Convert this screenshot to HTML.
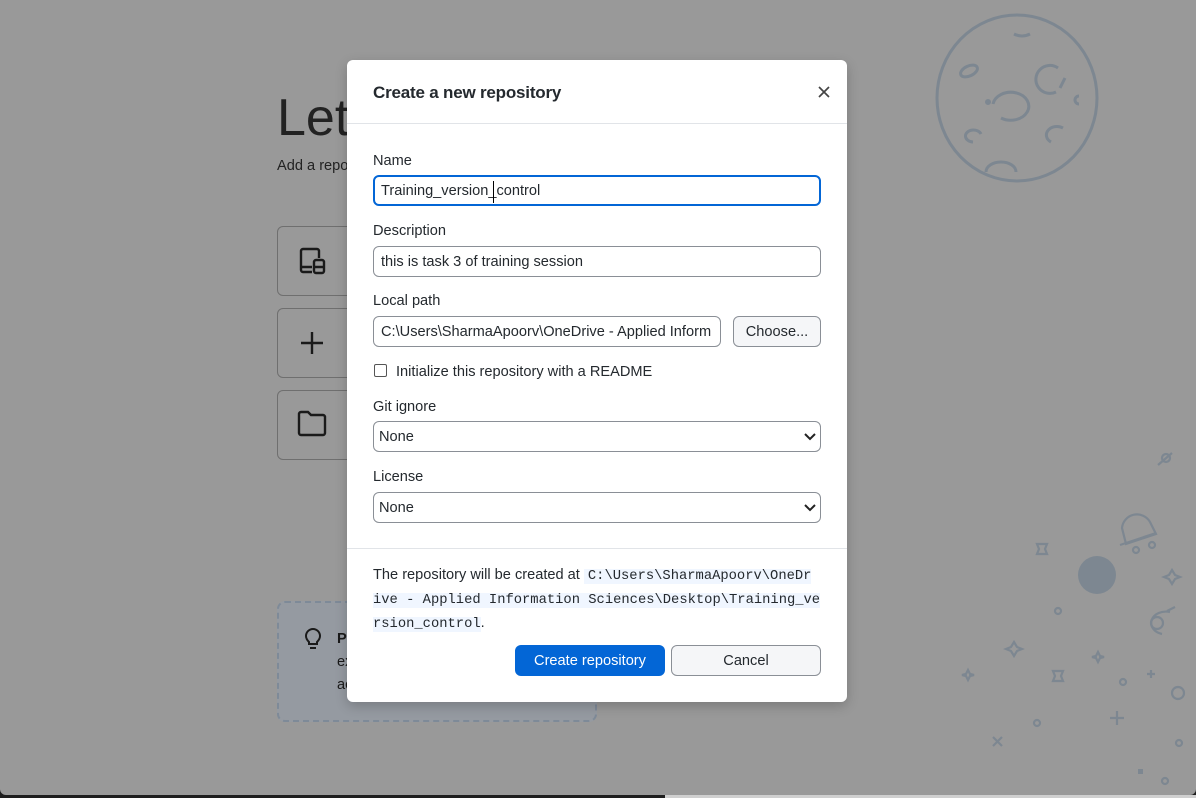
<!DOCTYPE html>
<html><head><style>
*{box-sizing:border-box}
body{margin:0;width:1196px;height:798px;overflow:hidden;background:#1e1e1e;font-family:"Liberation Sans",sans-serif;position:relative}
#bg{position:absolute;left:0;top:0;width:1196px;height:795px;background:#999;border-radius:0 0 6px 6px}
#strip{position:absolute;left:665px;top:795px;width:531px;height:3px;background:#cfcfcf}
.t{position:absolute;color:#1a1a1a}
.card{position:absolute;left:277px;width:100px;border:1px solid #6f6f6f;border-radius:6px}
.modal{position:absolute;left:347px;top:60px;width:500px;height:642px;background:#fff;border-radius:6px;box-shadow:0 4px 12px rgba(0,0,0,.2)}
.lbl{position:absolute;left:26px;font-size:14.6px;color:#24292e}
.inp{position:absolute;left:26px;width:448px;height:31px;border:1px solid #8a8f96;border-radius:6px;font-size:14.6px;color:#24292e;padding:2px 0 0 7px;line-height:27px;white-space:nowrap;overflow:hidden}
.code{font-family:"Liberation Mono",monospace;font-size:13.8px;background:#f0f6ff;white-space:nowrap}
</style></head><body>
<div id="bg"></div><div id="strip"></div>
<div class="t" style="left:277px;top:88px;font-size:52px;color:#222;font-weight:300">Let</div>
<div class="t" style="left:277px;top:158px;font-size:14.6px;color:#222">Add a repo</div>
<div class="card" style="top:226px;height:70px"></div>
<div class="card" style="top:308px;height:70px"></div>
<div class="card" style="top:390px;height:70px"></div>
<svg style="position:absolute;left:297px;top:245px" width="32" height="32" viewBox="0 0 32 32" fill="none" stroke="#1a1a1a" stroke-width="2.4"><path d="M15 27H6a2 2 0 0 1-2-2V6a2 2 0 0 1 2-2h14a2 2 0 0 1 2 2v7"/><rect x="17" y="15" width="10" height="13" rx="2"/><path d="M4 22h11M17 22h10"/></svg>
<svg style="position:absolute;left:297px;top:328px" width="30" height="30" viewBox="0 0 30 30" stroke="#1a1a1a" stroke-width="2.4"><path d="M15 4v22M4 15h22"/></svg>
<svg style="position:absolute;left:296px;top:409px" width="32" height="30" viewBox="0 0 32 30" fill="none" stroke="#1a1a1a" stroke-width="2.4"><path d="M3 5a2 2 0 0 1 2-2h7l3 3h12a2 2 0 0 1 2 2v16a2 2 0 0 1-2 2H5a2 2 0 0 1-2-2z"/></svg>
<div style="position:absolute;left:277px;top:601px;width:320px;height:121px;border:2px dashed #7e8a98;border-radius:8px;background:#959aa1"></div>
<svg style="position:absolute;left:303px;top:627px" width="20" height="24" viewBox="0 0 20 24" fill="none" stroke="#1a1a1a" stroke-width="2"><path d="M6 15c-2-2-3-3.5-3-6a7 7 0 0 1 14 0c0 2.5-1 4-3 6v2H6z M7 21h6"/></svg>
<div class="t" style="left:337px;top:631px;font-size:14.6px;font-weight:bold">P</div>
<div class="t" style="left:337px;top:654px;font-size:14.6px">ex</div>
<div class="t" style="left:337px;top:677px;font-size:14.6px">ac</div>
<svg style="position:absolute;left:0;top:0" width="1196" height="798" fill="none" stroke="#7d8791" stroke-width="3">
<ellipse cx="1017" cy="98" rx="80" ry="83"/>
<ellipse cx="969" cy="71" rx="9" ry="5" transform="rotate(-25 969 71)"/>
<path d="M1058 68a14 14 0 1 0 -2 24M1065 78l-5 10"/>
<path d="M1079 96a4 4 0 0 0 0 8"/>
<path d="M993 104a18 14 0 1 1 8 14"/><circle cx="988" cy="102" r="1.5"/>
<path d="M981 134a8 6 0 1 0 -8 8"/>
<path d="M1063 128a10 8 0 0 0 -12 14"/>
<path d="M986 172a15 10 0 0 1 30 0"/>
<path d="M1014 34q8 4 16 0"/>
<g stroke-width="2.2">
<circle cx="1166" cy="458" r="4"/><path d="M1158 465l14-12"/>
<path d="M1122 528a15 15 0 0 1 28 -6l6 12-30 10z M1120 545l36-12"/>
<circle cx="1136" cy="550" r="3"/><circle cx="1152" cy="545" r="3"/>
<path d="M1172 570l3 5 5 2-5 2-3 5-3-5-5-2 5-2z"/>
<path d="M1037 544l10 0 -2 5 2 5-10 0 2-5z"/>
<path d="M1175 607l-8 4 M1170 612a13 10 0 1 0 -8 22"/><circle cx="1157" cy="623" r="6"/>
<circle cx="1058" cy="611" r="3"/>
<path d="M1014 642l3 5 5 2-5 2-3 5-3-5-5-2 5-2z M968 670l2 4 4 1-4 1-2 4-2-4-4-1 4-1z M1098 652l2 4 4 1-4 1-2 4-2-4-4-1 4-1z"/>
<path d="M1053 671l10 0-2 5 2 5-10 0 2-5z"/>
<circle cx="1123" cy="682" r="3"/><circle cx="1178" cy="693" r="6"/><circle cx="1037" cy="723" r="3"/><circle cx="1179" cy="743" r="3"/><circle cx="1165" cy="781" r="3"/>
<path d="M1117 711v14M1110 718h14M1151 670v8M1147 674h8M993 737l9 9M1002 737l-9 9"/>
</g>
<rect x="1138" y="769" width="5" height="5" fill="#7d8791" stroke="none"/>
</svg>
<svg style="position:absolute;left:1076px;top:553px" width="44" height="44"><circle cx="21" cy="22" r="19" fill="#7d8791"/></svg>
<div class="modal">
<div style="position:absolute;left:26px;top:23px;font-size:17px;color:#24292e;font-weight:bold;letter-spacing:-0.2px">Create a new repository</div>
<svg style="position:absolute;left:471px;top:26px" width="12" height="12" viewBox="0 0 12 12" stroke="#444" stroke-width="1.7"><path d="M1 1l10 10M11 1L1 11"/></svg>
<div style="position:absolute;left:0;top:63px;width:500px;border-top:1px solid #e1e4e8"></div>
<div class="lbl" style="top:93px">Name</div>
<div class="inp" style="top:115px;border:2px solid #0366d6;line-height:25px;padding-left:6px">Training_version_control<span style="position:absolute;left:118px;top:4px;width:1px;height:22px;background:#000"></span></div>
<div class="lbl" style="top:163px">Description</div>
<div class="inp" style="top:186px">this is task 3 of training session</div>
<div class="lbl" style="top:233px">Local path</div>
<div class="inp" style="top:256px;width:348px">C:\Users\SharmaApoorv\OneDrive - Applied Inform</div>
<div style="position:absolute;left:386px;top:256px;width:88px;height:31px;border:1px solid #8a8f96;border-radius:6px;background:#f5f6f8;font-size:14.6px;text-align:center;padding-top:2px;line-height:27px;color:#24292e">Choose...</div>
<div style="position:absolute;left:27px;top:304px;width:13px;height:13px;border:1px solid #555;border-radius:2px"></div>
<div class="lbl" style="left:49px;top:304px">Initialize this repository with a README</div>
<div class="lbl" style="top:339px">Git ignore</div>
<div class="inp" style="top:361px;padding-left:5px">None</div>
<div class="lbl" style="top:409px">License</div>
<div class="inp" style="top:432px;padding-left:5px">None</div>
<svg style="position:absolute;left:457px;top:373px" width="12" height="8" viewBox="0 0 12 8" fill="none" stroke="#222" stroke-width="2"><path d="M1 1l5 5 5-5"/></svg>
<svg style="position:absolute;left:457px;top:444px" width="12" height="8" viewBox="0 0 12 8" fill="none" stroke="#222" stroke-width="2"><path d="M1 1l5 5 5-5"/></svg>
<div style="position:absolute;left:0;top:488px;width:500px;border-top:1px solid #e1e4e8"></div>
<div style="position:absolute;left:26px;top:504px;width:470px;font-size:14.6px;line-height:23px;color:#24292e">The repository will be created at <span class="code" style="padding-left:4px">C:\Users\SharmaApoorv\OneDr</span><br><span class="code">ive - Applied Information Sciences\Desktop\Training_ve</span><br><span class="code">rsion_control</span>.</div>
<div style="position:absolute;left:168px;top:585px;width:150px;height:31px;background:#0366d6;border-radius:6px;color:#fff;font-size:14.6px;text-align:center;padding-top:1px;line-height:30px">Create repository</div>
<div style="position:absolute;left:324px;top:585px;width:150px;height:31px;border:1px solid #8a8f96;background:#f5f6f8;border-radius:6px;color:#24292e;font-size:14.6px;text-align:center;padding-top:1px;line-height:28px">Cancel</div>
</div>
</body></html>
